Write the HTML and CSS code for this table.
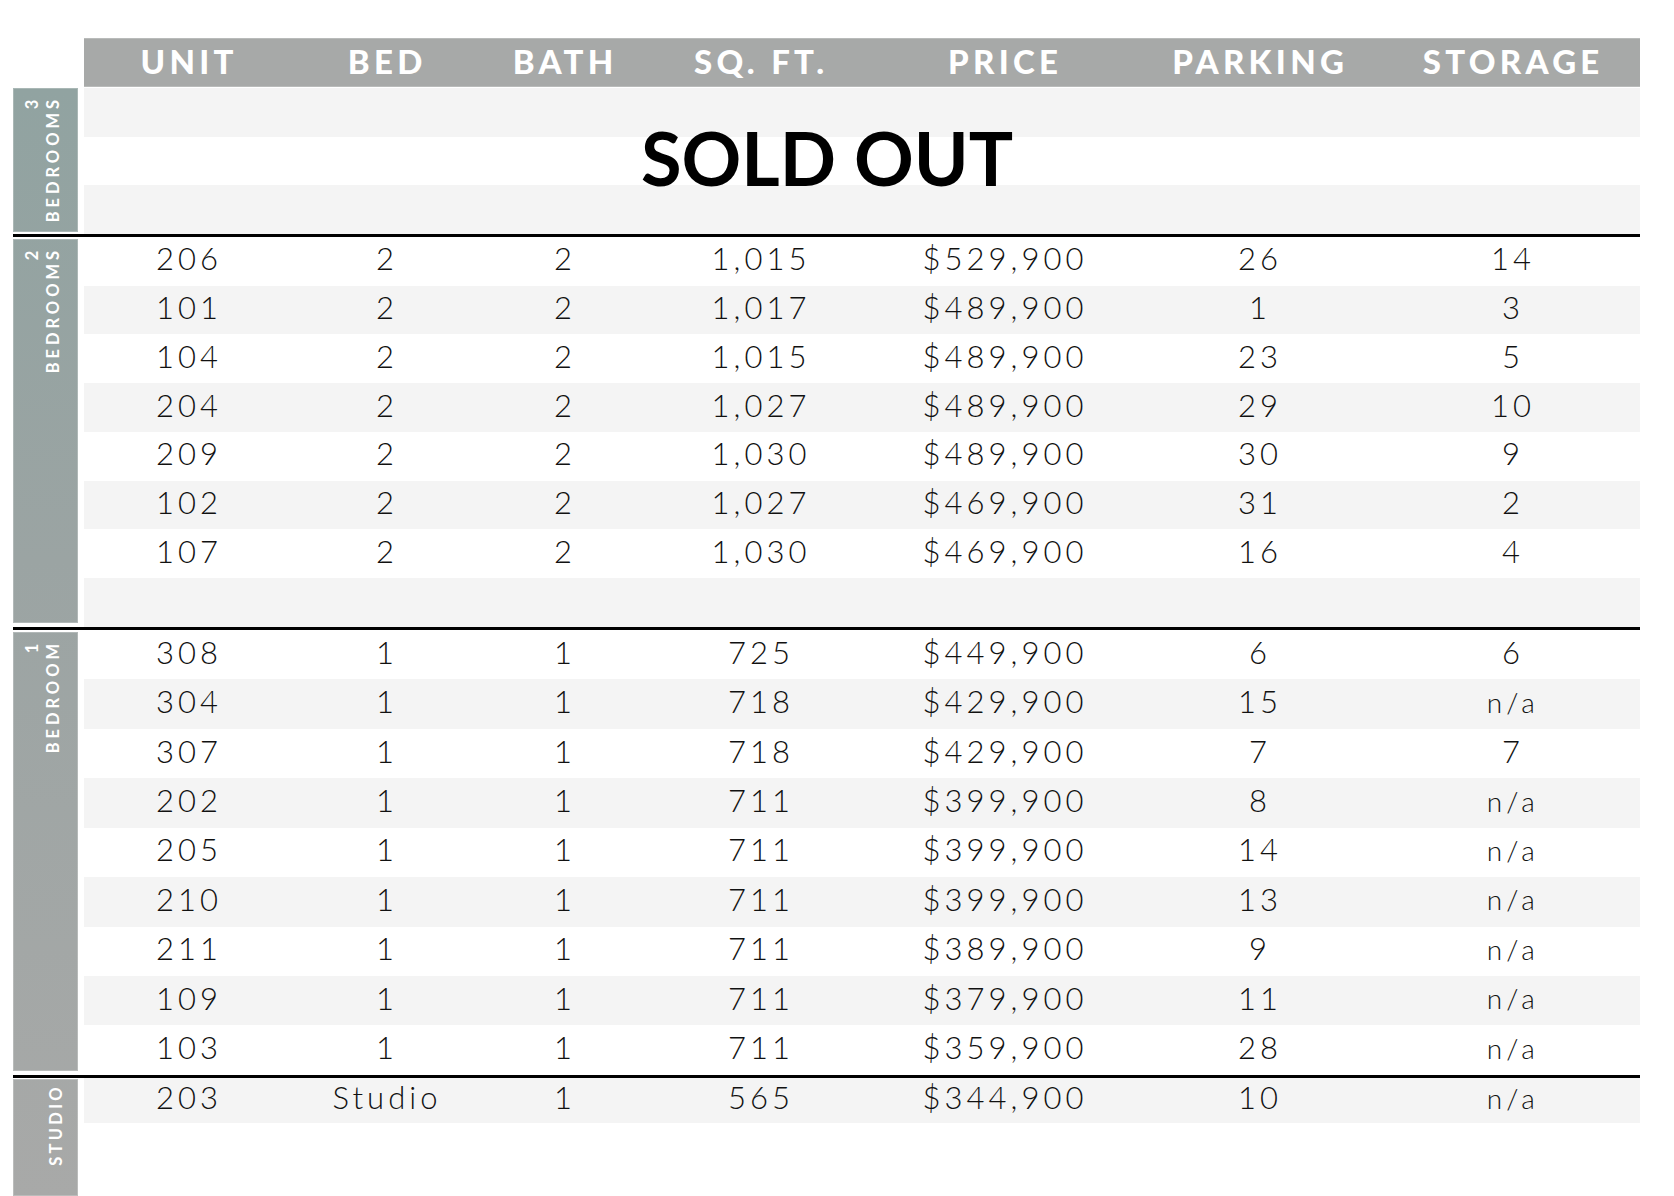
FILE: index.html
```html
<!DOCTYPE html>
<html lang="en">
<head>
<meta charset="utf-8">
<title>Unit Availability</title>
<link rel="stylesheet" href="styles.css">
</head>
<body>
<div class="sheet">
  <div class="head">
    <span>UNIT</span><span>BED</span><span>BATH</span><span>SQ. FT.</span><span>PRICE</span><span>PARKING</span><span>STORAGE</span>
  </div>

  <section class="group g3">
    <div class="side"><span class="label">3<br>BEDROOMS</span></div>
    <div class="rows soldout-wrap">
      <div class="band alt b1"></div>
      <div class="band b2"></div>
      <div class="band alt b3"></div>
      <div class="soldout">SOLD OUT</div>
    </div>
  </section>
  <div class="rule"></div>

  <section class="group g2">
    <div class="side"><span class="label">2<br>BEDROOMS</span></div>
    <div class="rows">
      <div class="row"><span>206</span><span>2</span><span>2</span><span>1,015</span><span>$529,900</span><span>26</span><span>14</span></div>
      <div class="row alt"><span>101</span><span>2</span><span>2</span><span>1,017</span><span>$489,900</span><span>1</span><span>3</span></div>
      <div class="row"><span>104</span><span>2</span><span>2</span><span>1,015</span><span>$489,900</span><span>23</span><span>5</span></div>
      <div class="row alt"><span>204</span><span>2</span><span>2</span><span>1,027</span><span>$489,900</span><span>29</span><span>10</span></div>
      <div class="row"><span>209</span><span>2</span><span>2</span><span>1,030</span><span>$489,900</span><span>30</span><span>9</span></div>
      <div class="row alt"><span>102</span><span>2</span><span>2</span><span>1,027</span><span>$469,900</span><span>31</span><span>2</span></div>
      <div class="row"><span>107</span><span>2</span><span>2</span><span>1,030</span><span>$469,900</span><span>16</span><span>4</span></div>
      <div class="row alt"></div>
    </div>
  </section>
  <div class="rule"></div>

  <section class="group g1">
    <div class="side"><span class="label">1<br>BEDROOM</span></div>
    <div class="rows">
      <div class="row"><span>308</span><span>1</span><span>1</span><span>725</span><span>$449,900</span><span>6</span><span>6</span></div>
      <div class="row alt"><span>304</span><span>1</span><span>1</span><span>718</span><span>$429,900</span><span>15</span><span class="na">n/a</span></div>
      <div class="row"><span>307</span><span>1</span><span>1</span><span>718</span><span>$429,900</span><span>7</span><span>7</span></div>
      <div class="row alt"><span>202</span><span>1</span><span>1</span><span>711</span><span>$399,900</span><span>8</span><span class="na">n/a</span></div>
      <div class="row"><span>205</span><span>1</span><span>1</span><span>711</span><span>$399,900</span><span>14</span><span class="na">n/a</span></div>
      <div class="row alt"><span>210</span><span>1</span><span>1</span><span>711</span><span>$399,900</span><span>13</span><span class="na">n/a</span></div>
      <div class="row"><span>211</span><span>1</span><span>1</span><span>711</span><span>$389,900</span><span>9</span><span class="na">n/a</span></div>
      <div class="row alt"><span>109</span><span>1</span><span>1</span><span>711</span><span>$379,900</span><span>11</span><span class="na">n/a</span></div>
      <div class="row"><span>103</span><span>1</span><span>1</span><span>711</span><span>$359,900</span><span>28</span><span class="na">n/a</span></div>
    </div>
  </section>
  <div class="rule"></div>

  <section class="group gs">
    <div class="side"><span class="label studio">STUDIO</span></div>
    <div class="rows">
      <div class="row alt"><span>203</span><span>Studio</span><span>1</span><span>565</span><span>$344,900</span><span>10</span><span class="na">n/a</span></div>
    </div>
  </section>
</div>
</body>
</html>
```

FILE: styles.css
```css
html, body {
  margin: 0;
  background: #ffffff;
  overflow: hidden;
}

body {
  font-family: Lato, "Open Sans", "DejaVu Sans", sans-serif;
  color: #111111;
}

.sheet {
  width: 1627px;
  padding: 38px 0 0 13px;
}

/* header bar */
.head {
  margin-left: 71px;
  margin-bottom: 1px;
  height: 49px;
  background: #a7a9a8;
  box-shadow: inset 0 1px 0 #b9bbba, inset 0 -1px 0 #b9bbba;
  display: grid;
  grid-template-columns: 206px 190px 166px 226px 262px 248px 258px;
  align-items: center;
}

.head span {
  color: #ffffff;
  font-weight: 900;
  font-size: 33px;
  letter-spacing: 0.13em;
  padding-left: 0.13em;
  padding-bottom: 2px;
  text-align: center;
  line-height: 1;
}

/* section groups */
.group {
  display: flex;
  gap: 6px;
}

.side {
  width: 65px;
  flex: none;
  display: flex;
  align-items: flex-start;
  background-image: linear-gradient(to bottom, #91a3a1 88px, #9ba4a3 560px, #a8a9a8 1196px);
  background-attachment: fixed;
  box-shadow: inset 0 0 0 1px rgba(255, 255, 255, 0.22);
}

.label {
  writing-mode: vertical-rl;
  transform: rotate(180deg);
  text-align: end;
  color: #ffffff;
  font-weight: 700;
  font-size: 16.5px;
  line-height: 21px;
  letter-spacing: 0.24em;
  margin: 8px 0 0 8.5px;
}

.label.studio {
  font-size: 16.5px;
  letter-spacing: 0.2em;
  margin: 5px 0 0 33px;
}

.rows {
  flex: 1;
  min-width: 0;
}

.row {
  box-sizing: border-box;
  padding-bottom: 5px;
  display: grid;
  grid-template-columns: 206px 190px 166px 226px 262px 248px 258px;
  align-items: center;
  font-size: 31px;
  font-weight: 300;
  letter-spacing: 0.13em;
  line-height: 1;
}

.row span {
  text-align: center;
  padding-left: 0.13em;
}

.row .na {
  font-size: 28px;
}

.row.alt,
.band.alt {
  background: #f4f4f4;
}

.rule {
  height: 3px;
  background: #000000;
}

/* 3 bedrooms: sold out block */
.g3 .side { margin-bottom: 2px; }

.soldout-wrap {
  display: grid;
  grid-template-rows: 48.67px 48.67px 48.66px;
}

.band { grid-column: 1; }
.b1 { grid-row: 1; }
.b2 { grid-row: 2; }
.b3 { grid-row: 3; }

.soldout {
  grid-row: 1 / 4;
  grid-column: 1;
  align-self: center;
  justify-self: center;
  margin: 0 70px 5px 0;
  font-weight: 700;
  font-size: 74px;
  line-height: 1;
  color: #000000;
}

/* 2 bedrooms */
.g2 .side { margin: 2px 0 4px; }
.g2 .row { height: 48.75px; }

/* 1 bedroom */
.g1 .side { margin: 2px 0 4px; }
.g1 .row { height: 49.44px; }

/* studio */
.gs { height: 118px; }
.gs .side { margin-top: 1px; }
.gs .row { height: 45px; }
```
